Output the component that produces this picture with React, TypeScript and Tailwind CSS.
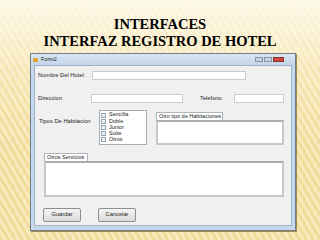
const ui = { fontFamily: '"Liberation Sans", Arial, sans-serif' };

function TextBox({ className }: { className: string }) {
    return <div className={`h-[9px] bg-white border border-[#c8cdd3] ${className}`} />;
}

function Check({ label }: { label: string }) {
    return (
        <div className="flex items-center h-[6.6px] gap-[3px]">
            <div className="w-[5px] h-[5px] border border-[#9aa4ad] bg-[#eef1f4]" />
            <span className="text-[5.5px] leading-none text-[#222]">{label}</span>
        </div>
    );
}

function Group({ title, tabWidth, className, boxHeight }: { title: string; tabWidth: string; className: string; boxHeight: string }) {
    return (
        <div className={`flex flex-col ${className}`}>
            <div className={`h-[8px] ${tabWidth} bg-white border border-b-0 border-[#aeb4ba] flex items-center px-[2px]`}>
                <span className="text-[5.5px] leading-none text-[#222] whitespace-nowrap">{title}</span>
            </div>
            <div className={`${boxHeight} bg-white border-2 border-[#c4c8cc] border-t-[#a8adb2]`} />
        </div>
    );
}

export default function App() {
    return (
        <div className="w-[320px] h-[240px] overflow-hidden flex flex-col bg-[linear-gradient(180deg,rgba(255,253,242,0.85)_0%,rgba(255,250,230,0.3)_30%,rgba(255,255,255,0)_60%),repeating-linear-gradient(60deg,#f2dc9c_0px,#f2dc9c_3px,#f8eabd_3px,#f8eabd_6px)]">
            <div className="flex flex-col items-center pt-[16px] text-[14.5px] leading-[17px] font-bold text-black" style={{ fontFamily: '"Liberation Serif", "Times New Roman", serif' }}>
                <div>INTERFACES</div>
                <div>INTERFAZ REGISTRO DE HOTEL</div>
            </div>
            <div className="ml-[30px] mt-[3px] w-[266px] h-[178px] border border-[#6f7d8c] bg-[#c5d8ec] flex flex-col shadow-[1px_1px_0_#a08a50]" style={ui}>
                <div className="h-[11px] flex items-center px-[2px] bg-[linear-gradient(180deg,#dbe6f3,#c3d5ea)]">
                    <div className="w-[5px] h-[4px] bg-[#e0a030] rounded-[1px] mr-[3px]" />
                    <span className="text-[5.5px] leading-none text-[#1a1a1a]">Form2</span>
                    <div className="ml-auto flex gap-[1px] mr-[9px]">
                        <div className="w-[8px] h-[5px] bg-[#c9d3de] border border-[#8796a6]" />
                        <div className="w-[8px] h-[5px] bg-[#c9d3de] border border-[#8796a6]" />
                        <div className="w-[11px] h-[5px] bg-[#d04840] border border-[#8a3028]" />
                    </div>
                </div>
                <div className="flex-1 mx-[3px] mb-[4px] bg-[#f0f0f0] border border-[#9fb3c8] flex flex-col text-[5.75px] leading-none text-[#222]">
                    <div className="flex items-center mt-[5px] h-[9px]">
                        <span className="ml-[3px] w-[54px]">Nombre Del Hotel</span>
                        <TextBox className="w-[154px]" />
                    </div>
                    <div className="flex items-center mt-[14px] h-[9px]">
                        <span className="ml-[3px] w-[53px]">Direccion</span>
                        <TextBox className="w-[92px]" />
                        <span className="ml-[17px] w-[34px]">Telefono</span>
                        <TextBox className="w-[50px]" />
                    </div>
                    <div className="flex mt-[7px]">
                        <span className="ml-[4px] w-[60px] mt-[9px]">Tipos De Habitacion</span>
                        <div className="w-[48px] h-[35px] bg-white border border-[#a8adb2] px-[1px] py-[1px] flex flex-col">
                            <Check label="Sencilla" />
                            <Check label="Doble" />
                            <Check label="Junior" />
                            <Check label="Suite" />
                            <Check label="Otros" />
                        </div>
                        <Group title="Otro tipo de Habitaciones" tabWidth="w-[67px]" className="ml-[9px] mt-[2px] w-[128px]" boxHeight="h-[25px]" />
                    </div>
                    <Group title="Otros Servicios" tabWidth="w-[44px]" className="ml-[9px] mt-[8px] w-[240px]" boxHeight="h-[36px]" />
                    <div className="flex mt-[11px] ml-[8px] gap-[17px]">
                        <div className="w-[38px] h-[14px] bg-[linear-gradient(180deg,#f4f4f4,#dcdcdc)] border border-[#8e8f8f] rounded-[2px] flex items-center justify-center">Guardar</div>
                        <div className="w-[38px] h-[14px] bg-[linear-gradient(180deg,#f4f4f4,#dcdcdc)] border border-[#8e8f8f] rounded-[2px] flex items-center justify-center">Cancelar</div>
                    </div>
                </div>
            </div>
        </div>
    );
}
